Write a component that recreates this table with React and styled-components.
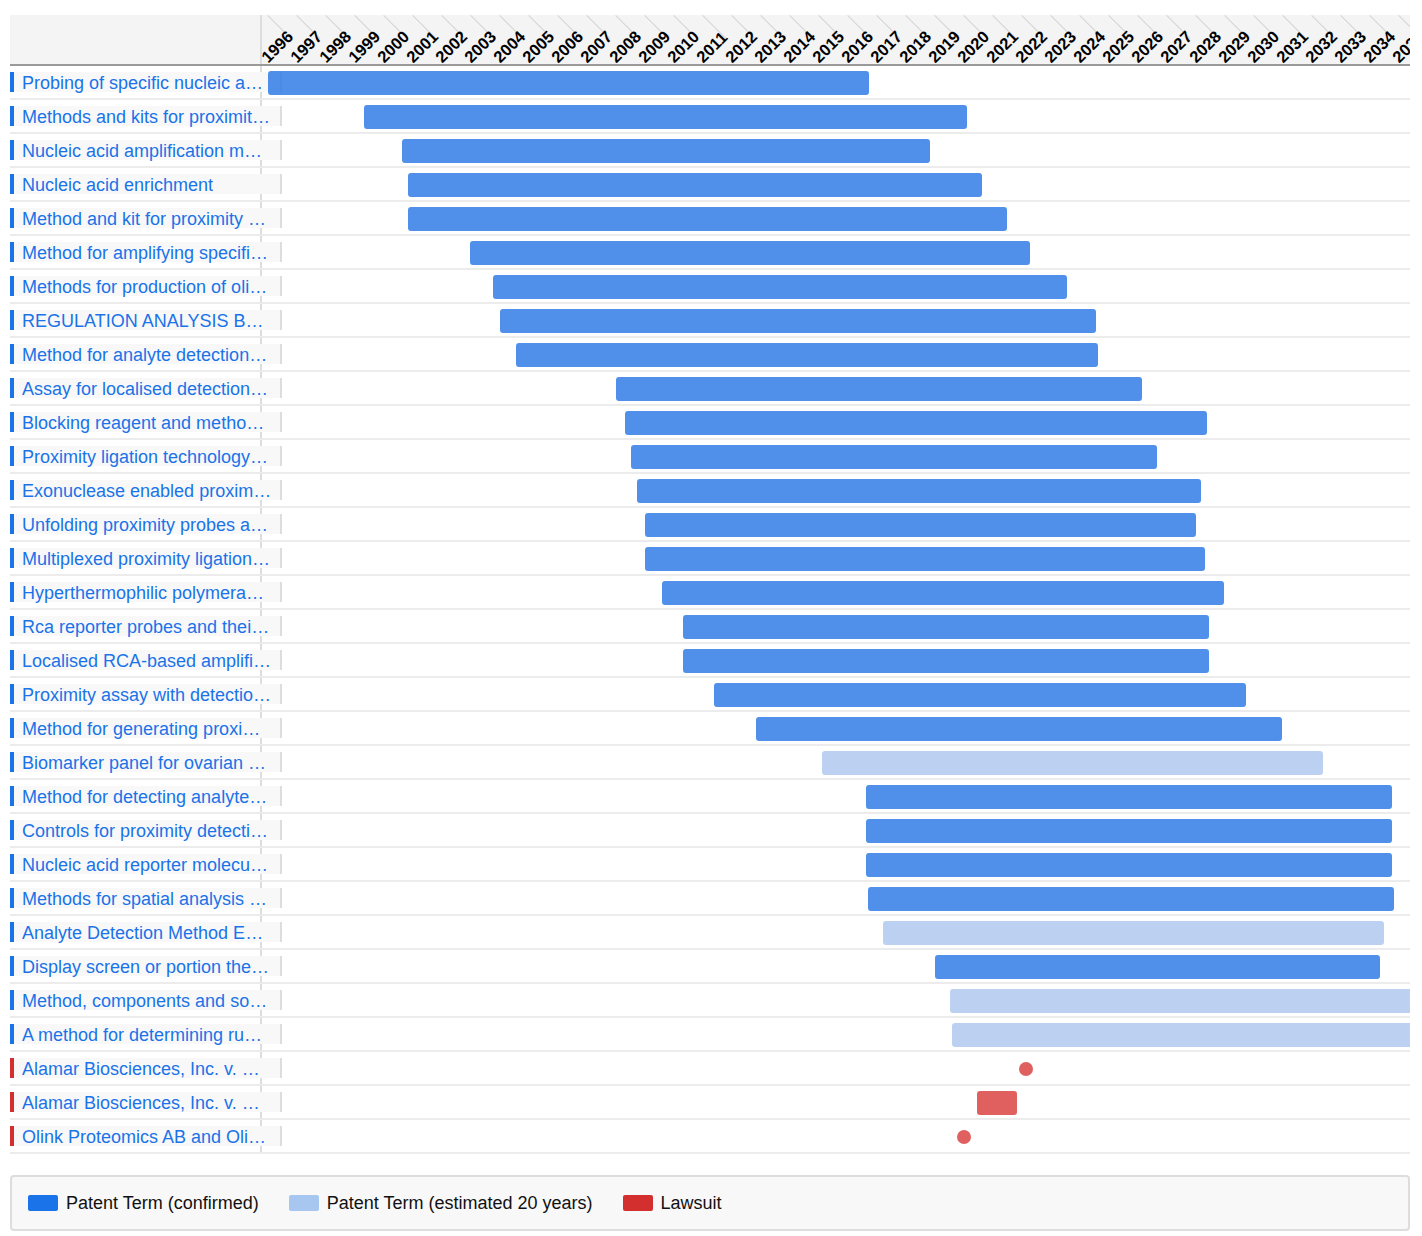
import styled, { createGlobalStyle } from 'styled-components';

const PX_PER_YEAR = 29;
const FIRST_YEAR = 1996;
const AXIS_OFFSET = 6;
const YEARS = Array.from({ length: 40 }, (_, i) => FIRST_YEAR + i);

const xFor = (year) => AXIS_OFFSET + (year - FIRST_YEAR) * PX_PER_YEAR;

const rows = [
  { title: 'Probing of specific nucleic a…', kind: 'confirmed', start: 1996.0, end: 2016.72 },
  { title: 'Methods and kits for proximit…', kind: 'confirmed', start: 1999.31, end: 2020.1 },
  { title: 'Nucleic acid amplification m…', kind: 'confirmed', start: 2000.62, end: 2018.83 },
  { title: 'Nucleic acid enrichment', kind: 'confirmed', start: 2000.83, end: 2020.62 },
  { title: 'Method and kit for proximity …', kind: 'confirmed', start: 2000.83, end: 2021.48 },
  { title: 'Method for amplifying specifi…', kind: 'confirmed', start: 2002.97, end: 2022.28 },
  { title: 'Methods for production of oli…', kind: 'confirmed', start: 2003.76, end: 2023.55 },
  { title: 'REGULATION ANALYSIS B…', kind: 'confirmed', start: 2004.0, end: 2024.55 },
  { title: 'Method for analyte detection…', kind: 'confirmed', start: 2004.55, end: 2024.62 },
  { title: 'Assay for localised detection…', kind: 'confirmed', start: 2008.0, end: 2026.14 },
  { title: 'Blocking reagent and metho…', kind: 'confirmed', start: 2008.31, end: 2028.38 },
  { title: 'Proximity ligation technology…', kind: 'confirmed', start: 2008.52, end: 2026.66 },
  { title: 'Exonuclease enabled proxim…', kind: 'confirmed', start: 2008.72, end: 2028.17 },
  { title: 'Unfolding proximity probes a…', kind: 'confirmed', start: 2009.0, end: 2028.0 },
  { title: 'Multiplexed proximity ligation…', kind: 'confirmed', start: 2009.0, end: 2028.31 },
  { title: 'Hyperthermophilic polymera…', kind: 'confirmed', start: 2009.59, end: 2028.97 },
  { title: 'Rca reporter probes and thei…', kind: 'confirmed', start: 2010.31, end: 2028.45 },
  { title: 'Localised RCA-based amplifi…', kind: 'confirmed', start: 2010.31, end: 2028.45 },
  { title: 'Proximity assay with detectio…', kind: 'confirmed', start: 2011.38, end: 2029.72 },
  { title: 'Method for generating proxi…', kind: 'confirmed', start: 2012.83, end: 2030.97 },
  { title: 'Biomarker panel for ovarian …', kind: 'estimated', start: 2015.1, end: 2032.38 },
  { title: 'Method for detecting analyte…', kind: 'confirmed', start: 2016.62, end: 2034.76 },
  { title: 'Controls for proximity detecti…', kind: 'confirmed', start: 2016.62, end: 2034.76 },
  { title: 'Nucleic acid reporter molecu…', kind: 'confirmed', start: 2016.62, end: 2034.76 },
  { title: 'Methods for spatial analysis …', kind: 'confirmed', start: 2016.69, end: 2034.83 },
  { title: 'Analyte Detection Method E…', kind: 'estimated', start: 2017.21, end: 2034.48 },
  { title: 'Display screen or portion the…', kind: 'confirmed', start: 2019.0, end: 2034.34 },
  { title: 'Method, components and so…', kind: 'estimated', start: 2019.52, end: 2039.52 },
  { title: 'A method for determining ru…', kind: 'estimated', start: 2019.59, end: 2039.59 },
  { title: 'Alamar Biosciences, Inc. v. …', kind: 'lawsuit', start: 2022.14 },
  { title: 'Alamar Biosciences, Inc. v. …', kind: 'lawsuit', start: 2020.45, end: 2021.83 },
  { title: 'Olink Proteomics AB and Oli…', kind: 'lawsuit', start: 2020.0 },
];

const barColors = {
  confirmed: 'rgba(49, 124, 230, 0.85)',
  estimated: 'rgba(176, 201, 240, 0.85)',
  lawsuit: 'rgba(219, 68, 68, 0.85)',
};

const legendItems = [
  { label: 'Patent Term (confirmed)', color: '#1a73e8' },
  { label: 'Patent Term (estimated 20 years)', color: '#a8c7f0' },
  { label: 'Lawsuit', color: '#d32f2f' },
];

const GlobalStyle = createGlobalStyle`
  body {
    margin: 0;
    background: #fff;
    font-family: "Liberation Sans", Arial, sans-serif;
  }
`;

export default function App() {
  return (
    <>
      <GlobalStyle />
      <Page>
        <Chart>
          <Header>
            <HeadLabel />
            <YearAxis>
              {YEARS.map((y) => (
                <YearCell key={y}>
                  <YearText>{y}</YearText>
                </YearCell>
              ))}
            </YearAxis>
          </Header>
          {rows.map((row, i) => (
            <Row key={i}>
              <LabelCol>
                <LabelBox $accent={row.kind === 'lawsuit' ? '#d32f2f' : '#1a73e8'}>
                  <LabelText>{row.title}</LabelText>
                </LabelBox>
              </LabelCol>
              <Track>
                {row.end ? (
                  <Bar
                    $kind={row.kind}
                    style={{ left: xFor(row.start), width: xFor(row.end) - xFor(row.start) }}
                  />
                ) : (
                  <Dot $kind={row.kind} style={{ left: xFor(row.start) - 7 }} />
                )}
              </Track>
            </Row>
          ))}
        </Chart>
        <Legend>
          {legendItems.map((item) => (
            <LegendItem key={item.label}>
              <Swatch $color={item.color} />
              {item.label}
            </LegendItem>
          ))}
        </Legend>
      </Page>
    </>
  );
}

const Page = styled.div`
  padding: 15px 12px 5px 10px;
`;

const Chart = styled.div`
  width: 1400px;
  overflow: hidden;
`;

const Header = styled.div`
  display: flex;
  height: 49px;
  background: #f4f4f4;
  border-bottom: 2px solid #9a9a9a;
`;

const HeadLabel = styled.div`
  flex: none;
  width: 250px;
  border-right: 2px solid #ddd;
`;

const YearAxis = styled.div`
  flex: 1;
  min-width: 0;
  display: flex;
  padding-left: ${AXIS_OFFSET}px;
`;

const YearCell = styled.div`
  flex: 0 0 ${PX_PER_YEAR}px;
  min-width: 0;
  position: relative;
  display: flex;
  align-items: flex-end;

  &::before {
    content: '';
    position: absolute;
    left: 0;
    top: 0;
    width: 33px;
    height: 1px;
    background: #d4d4d4;
    transform-origin: 0 0;
    transform: rotate(45deg);
  }
`;

const YearText = styled.span`
  display: inline-block;
  flex: none;
  margin: 0 0 -1px 2px;
  font-size: 16.5px;
  font-weight: 700;
  line-height: 1;
  color: #000;
  white-space: nowrap;
  transform-origin: left bottom;
  transform: rotate(-45deg);
`;

const Row = styled.div`
  display: flex;
  height: 34px;
  box-sizing: border-box;
  border-bottom: 2px solid #ececec;
`;

const LabelCol = styled.div`
  flex: none;
  width: 250px;
  display: flex;
  align-items: center;
  border-right: 2px solid #ddd;
`;

const LabelBox = styled.div`
  flex: none;
  width: 272px;
  height: 20px;
  box-sizing: border-box;
  display: flex;
  align-items: center;
  padding: 1px 0 0 8px;
  background: #f8f8f8;
  border-left: 4px solid ${(p) => p.$accent};
  border-right: 2px solid #ddd;
`;

const LabelText = styled.span`
  font-size: 18px;
  line-height: 20px;
  color: #1a73e8;
  white-space: nowrap;
  overflow: hidden;
`;

const Track = styled.div`
  flex: 1;
  min-width: 0;
  position: relative;
  overflow: hidden;
`;

const Bar = styled.div`
  position: absolute;
  top: 5px;
  height: 24px;
  border-radius: 3px;
  background: ${(p) => barColors[p.$kind]};
`;

const Dot = styled.div`
  position: absolute;
  top: 10px;
  width: 14px;
  height: 14px;
  border-radius: 50%;
  background: ${(p) => barColors[p.$kind]};
`;

const Legend = styled.div`
  width: 1400px;
  height: 56px;
  margin-top: 21px;
  box-sizing: border-box;
  display: flex;
  align-items: center;
  gap: 30px;
  padding-left: 16px;
  background: #f8f8f8;
  border: 2px solid #ddd;
  border-radius: 4px;
`;

const LegendItem = styled.div`
  display: flex;
  align-items: center;
  gap: 8px;
  font-size: 18px;
  color: #111;
`;

const Swatch = styled.span`
  width: 30px;
  height: 16px;
  border-radius: 2px;
  background: ${(p) => p.$color};
`;
